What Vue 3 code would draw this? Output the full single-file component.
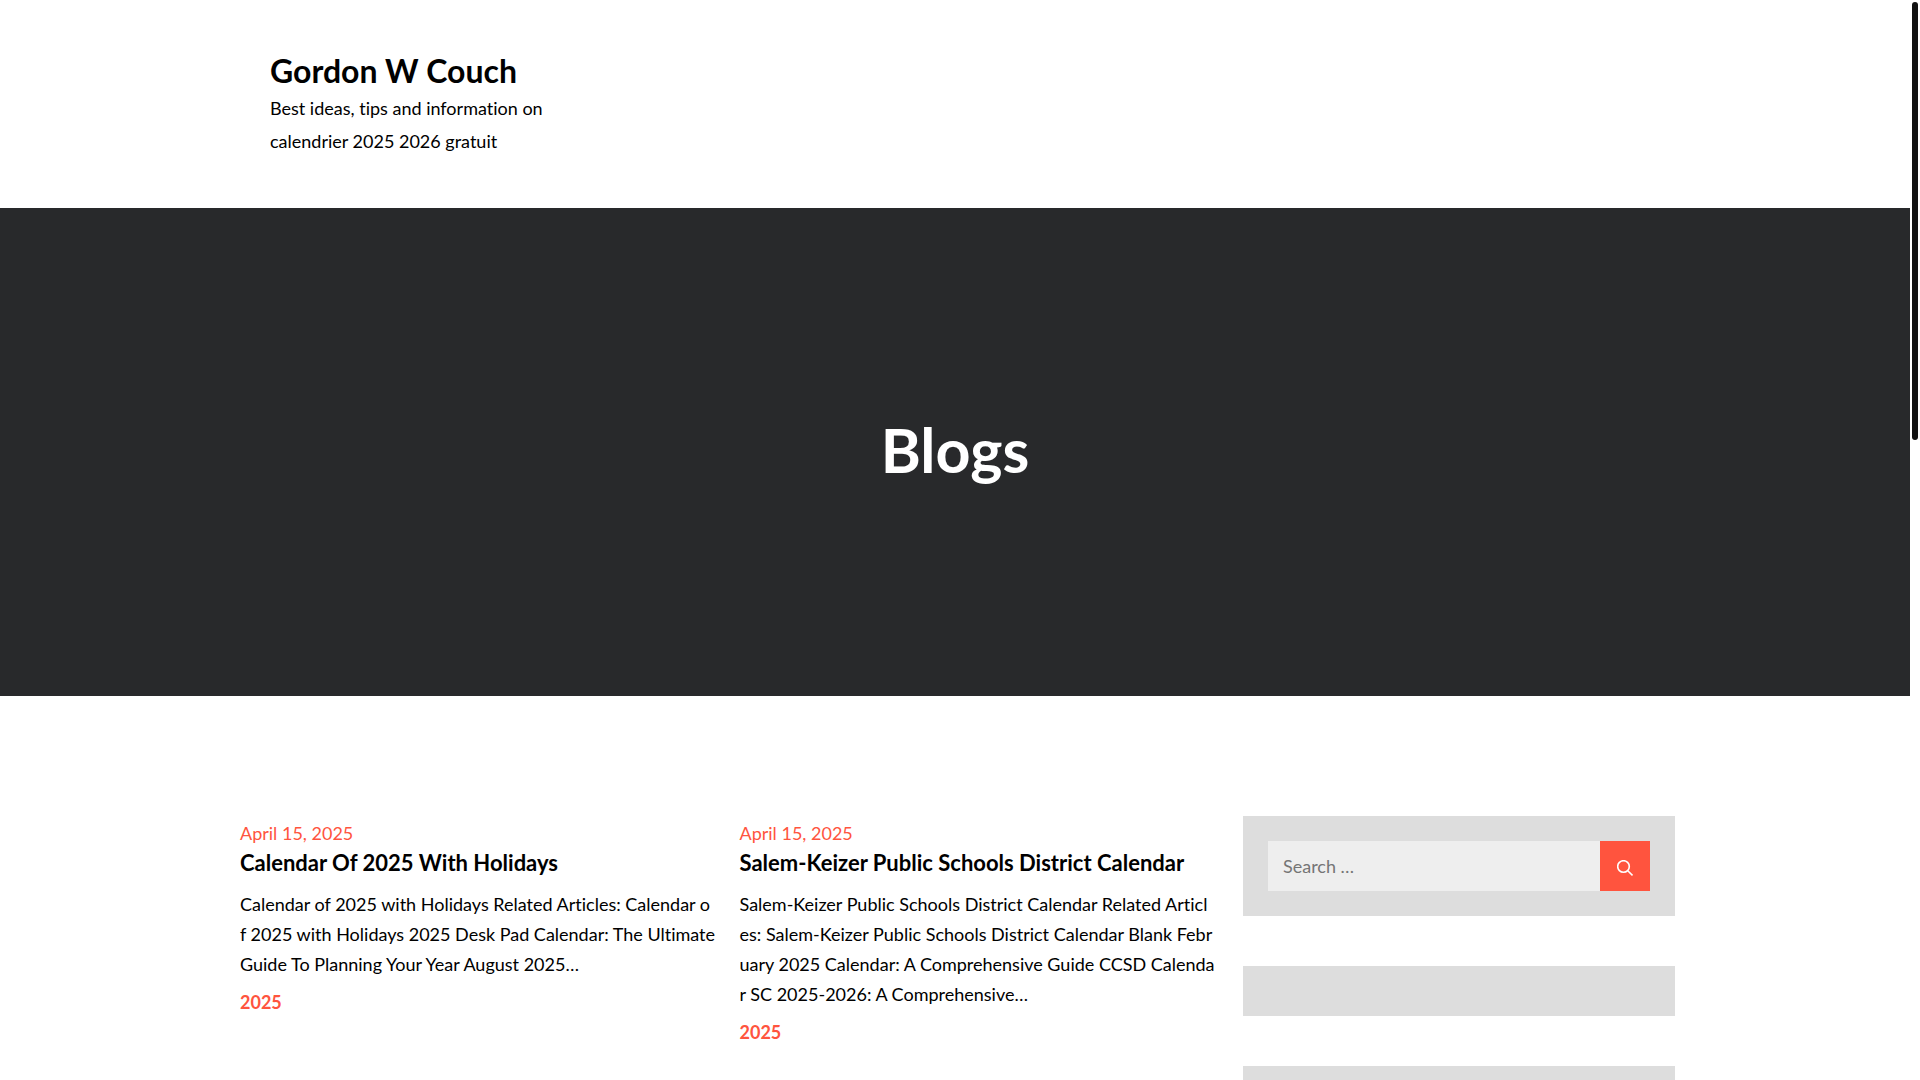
<script setup>
import { ref } from 'vue'

const query = ref('')

const posts = [
  {
    id: 1,
    date: 'April 15, 2025',
    title: 'Calendar Of 2025 With Holidays',
    excerpt: [
      'Calendar of 2025 with Holidays Related Articles: Calendar o',
      'f 2025 with Holidays 2025 Desk Pad Calendar: The Ultimate',
      'Guide To Planning Your Year August 2025…',
    ],
    category: '2025',
  },
  {
    id: 2,
    date: 'April 15, 2025',
    title: 'Salem-Keizer Public Schools District Calendar',
    excerpt: [
      'Salem-Keizer Public Schools District Calendar Related Articl',
      'es: Salem-Keizer Public Schools District Calendar Blank Febr',
      'uary 2025 Calendar: A Comprehensive Guide CCSD Calenda',
      'r SC 2025-2026: A Comprehensive…',
    ],
    category: '2025',
  },
]
</script>

<template>
  <div class="viewport">
    <div class="page">
      <header class="site-header">
        <div class="branding">
          <p class="site-title"><a href="#">Gordon W Couch</a></p>
          <p class="tagline">Best ideas, tips and information on calendrier 2025 2026 gratuit</p>
        </div>
      </header>

      <section class="banner">
        <h1>Blogs</h1>
      </section>

      <div class="content">
        <main class="posts">
          <article v-for="post in posts" :key="post.id" class="post">
            <a class="date" href="#"><time datetime="2025-04-15">{{ post.date }}</time></a>
            <h2><a href="#">{{ post.title }}</a></h2>
            <p class="excerpt">{{ post.excerpt.join('\n') }}</p>
            <a class="category" href="#">{{ post.category }}</a>
          </article>
        </main>

        <aside class="sidebar">
          <section class="widget">
            <form class="search" role="search" @submit.prevent>
              <input v-model="query" type="search" placeholder="Search …" aria-label="Search for" />
              <button type="submit" aria-label="Search">
                <svg viewBox="0 0 16 16" width="16" height="16" aria-hidden="true">
                  <circle cx="6.5" cy="6.5" r="5.8" />
                  <path d="M10.8 10.8L15.5 15.4" />
                </svg>
              </button>
            </form>
          </section>
          <section class="widget"></section>
          <section class="widget"></section>
        </aside>
      </div>
    </div>
    <div class="scroll-thumb"></div>
  </div>
</template>

<style>
body {
  margin: 0;
  background: #fff;
}
</style>

<style scoped>
.viewport {
  height: 100vh;
  overflow-y: auto;
  scrollbar-width: none;
  box-sizing: border-box;
  padding-right: 10px;
  font-family: Lato, sans-serif;
  font-size: 18px;
  line-height: 30px;
  font-variant-ligatures: none;
  color: #000;
}

a {
  color: inherit;
  text-decoration: none;
}

p,
h1,
h2 {
  margin: 0;
}

.site-header {
  max-width: 1440px;
  margin: 0 auto;
  padding: 50px 35px;
  box-sizing: border-box;
}

.branding {
  max-width: 300px;
}

.site-title {
  font-size: 32px;
  line-height: 42px;
  font-weight: 700;
}

.tagline {
  line-height: 33px;
}

.banner {
  display: flex;
  align-items: center;
  justify-content: center;
  height: 488px;
  background: #28292b;
  color: #fff;
}

.banner h1 {
  padding-bottom: 4px;
  font-size: 61px;
  line-height: 74px;
  font-weight: 700;
}

.content {
  display: flex;
  align-items: flex-start;
  gap: 34px;
  max-width: 1440px;
  margin: 0 auto;
  padding: 120px 0;
}

.posts {
  flex: 1;
  display: grid;
  grid-template-columns: minmax(0, 1fr) minmax(0, 1fr);
  gap: 30px;
  margin-left: 5px;
}

.date {
  display: block;
  padding-top: 2px;
  color: #ff543e;
}

.post h2 {
  font-family: 'Arima Madurai', Lato, sans-serif;
  font-size: 22px;
  line-height: 30px;
  font-weight: 700;
  margin-bottom: 11px;
  white-space: nowrap;
}

.excerpt {
  white-space: pre;
  margin-bottom: 8px;
}

.category {
  color: #ff543e;
  font-weight: 700;
}

.sidebar {
  width: 30%;
  display: flex;
  flex-direction: column;
  gap: 50px;
}

.widget {
  padding: 25px;
  background: #ddd;
}

.search {
  display: flex;
  height: 50px;
}

.search input {
  flex: 1;
  min-width: 0;
  padding: 0 15px;
  border: 0;
  border-radius: 0;
  appearance: none;
  background: #eee;
  font: inherit;
}

.search input::placeholder {
  color: #757575;
}

.search button {
  width: 50px;
  padding: 4px 0 0;
  border: 0;
  background: #ff543e;
  display: flex;
  align-items: center;
  justify-content: center;
}

.search svg {
  fill: none;
  stroke: #fff;
  stroke-width: 1.6;
}

.scroll-thumb {
  position: fixed;
  top: 2px;
  right: 2px;
  width: 6px;
  height: 438px;
  border-radius: 5px;
  background: #111;
}
</style>
